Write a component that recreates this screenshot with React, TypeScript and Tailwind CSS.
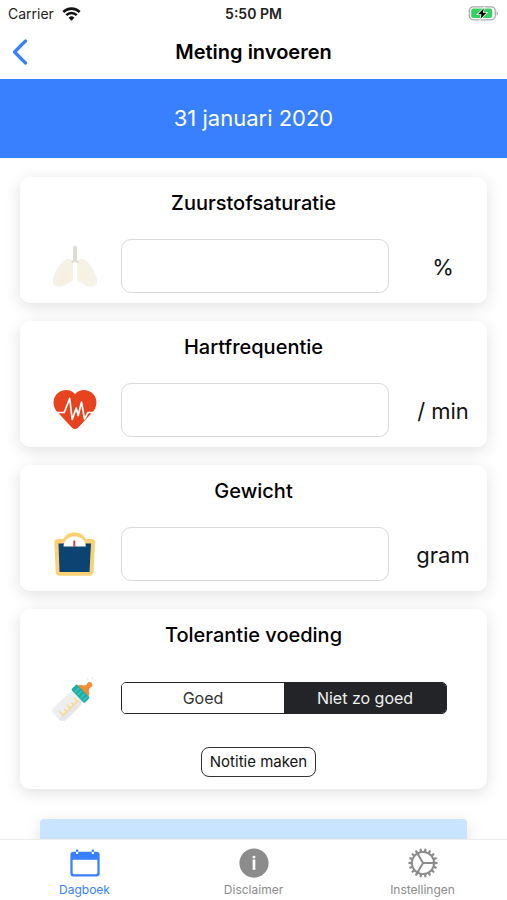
import { useState, type ReactNode } from 'react';
import { IoIosCalendar, IoIosCog, IoIosInformationCircle } from 'react-icons/io';

function WifiIcon() {
  return (
    <svg viewBox="0 0 20 15" className="h-[14px] w-[19px]" fill="none" stroke="#111" strokeWidth="2.8" aria-hidden="true">
      <path d="M1.2 5.4a12.4 12.4 0 0 1 17.6 0" />
      <path d="M4.4 8.7a7.9 7.9 0 0 1 11.2 0" />
      <path d="M10 14.6 6.9 11.5a4.4 4.4 0 0 1 6.2 0Z" fill="#111" stroke="none" />
    </svg>
  );
}

function BatteryIcon() {
  return (
    <svg viewBox="0 0 31 16" className="h-4 w-[31px]" aria-hidden="true">
      <rect x="1.3" y="0.8" width="26" height="13" rx="4" fill="#fff" stroke="#a9a9a9" strokeWidth="1.2" />
      <path d="M28.6 5.3c1.9.8 1.9 3.6 0 4.4Z" fill="#a9a9a9" />
      <rect x="3.2" y="2.6" width="21" height="9.4" rx="2.2" fill="#35d15c" />
      <path d="M15.8 2.3 10 8.200h3.500l-1 4.600 6-6.100h-3.600Z" fill="#000" stroke="#fff" strokeWidth="1.6" paintOrder="stroke" />
    </svg>
  );
}

function LungsIcon() {
  return (
    <svg viewBox="0 0 46 46" className="size-[46px]" aria-hidden="true">
      <path d="M14 16.500c2-.8 5-.5 7 1.500v20c-3 1-5.500 2.500-8 4-3 1.800-7 2-10 .5-2-1-2.500-3-2-5.500C2.500 29 7.500 20 14 16.500Z" fill="#f7f1e5" />
      <path d="M32 16.500c-2-.8-5-.5-7 1.500v20c3 1 5.500 2.500 8 4 3 1.800 7 2 10 .5 2-1 2.500-3 2-5.500C43.500 29 38.500 20 32 16.500Z" fill="#f7f2e6" />
      <path d="M14 26c-4 2-6 6-7 10l2 4c3 0 6-2 9-4Z" fill="#f9eee2" />
      <path d="M31 26c4 3 6 6 8 10l-3 3c-3 0-5-2-8-4Z" fill="#f8f0e2" />
      <path d="M21 4c0-1.500 4-1.500 4 0v13l2 2-1.300 1.500L23 18.500l-2.700 2L19 19l2-2Z" fill="#dcddd3" />
      <path d="M21 21c1.300-2 2.700-2 4 0v18h-4Z" fill="#fff" />
    </svg>
  );
}

function HeartIcon() {
  return (
    <svg viewBox="0 0 46 46" className="size-[46px]" aria-hidden="true">
      <path d="M23 7C27.500 2 34.500 1.800 39.500 5.500c5.800 4.500 6.300 12 2.500 18L26 40.800c-1.700 1.700-4.300 1.700-6 0L4 23.500C.2 17.500.7 10 6.500 5.500 11.500 1.800 18.500 2 23 7Z" fill="#e8431f" />
      <path d="M4 25.500h8.200l5.500-14 2.500 21 4-11.500 2 7.500L29.500 15l3 17 3.500-6.500h7" fill="none" stroke="#fff" strokeWidth="1.700" strokeLinejoin="round" />
    </svg>
  );
}

function ScaleIcon() {
  return (
    <svg viewBox="0 0 46 46" className="size-[46px]" aria-hidden="true">
      <path d="M6 8h5C14 3.500 17 1.500 22.500 1.500S31 3.500 34 8h5.500c2.500 0 3.700 1.200 3.500 3.700L41.500 41c-.2 2.500-1.300 3.700-3.800 3.700H7.600c-2.500 0-3.600-1.200-3.800-3.700L2.300 11.700C2.200 9.200 3.500 8 6 8Z" fill="#fbd174" />
      <path d="M6.500 12.500h32.500L37.500 41h-30Z" fill="#0b4373" />
      <path d="M11.500 15.500c0-1.500.4-3 1-4.500C14.500 7.500 18 5.500 22.500 5.500s8.500 2 10.300 5.500c.7 1.500 1 3 1 4.500Z" fill="#fff" />
      <path d="M22.300 9.500v6.500" stroke="#cf4055" strokeWidth="2" />
    </svg>
  );
}

function BottleIcon() {
  return (
    <svg viewBox="0 0 46 46" className="size-[46px]" aria-hidden="true">
      <path d="M35 3l1.500 2M40 2l.5 2.500M44.500 4.500l-1.500 1" stroke="#efedec" strokeWidth="1.300" />
      {/* the bottle stands upright here and is tilted as a whole */}
      <g transform="translate(37.500 10) rotate(46)">
        <path d="M-6 15.500H6C8.300 18 8.600 20 8.600 23v18c0 3.200-1.500 4.800-4.800 4.800h-7.600c-3.300 0-4.800-1.600-4.800-4.800V23c0-3 .3-5 2.600-7.500Z" fill="#eeeff1" />
        <path d="M3 15.500h3C8.300 18 8.600 20 8.600 23v18c0 3.200-1.500 4.800-4.800 4.800H3Z" fill="#e5e7ea" />
        <path d="M3.500 19v21h-6M3.500 20h-5M3.500 25h-3.500M3.500 30h-5M3.500 35h-3.500" fill="none" stroke="#f7dc91" strokeWidth="1.700" />
        <path d="M-7.500 9.500c0-3.500 3.500-4 4.800-6.200.7-1.300.2-2.300-.1-3C-3.300-1.500-2-2.800 0-2.800S3.300-1.500 2.800.3c-.3.700-.8 1.700-.1 3C4 5.500 7.500 6 7.500 9.500Z" fill="#f68b35" />
        <rect x="-9.500" y="8.500" width="19" height="8" rx="1.500" fill="#20afa8" />
        <path d="M-5 9.500v6M-1 9.500v6M3 9.500v6M7 9.500v6" stroke="#41c6bb" strokeWidth="1.200" />
      </g>
    </svg>
  );
}

function Card({ title, children }: { title: string; children: ReactNode }) {
  return (
    <section className="rounded-[10px] bg-white px-2 pt-3 shadow-[0_4px_16px_rgba(0,0,0,0.12)]">
      <h2 className="mb-[22px] text-center text-xl leading-7 font-medium text-black">{title}</h2>
      {children}
    </section>
  );
}

type MeasurementProps = {
  title: string;
  unit: string;
  icon: ReactNode;
};

function Measurement({ title, unit, icon }: MeasurementProps) {
  const [value, setValue] = useState('');

  return (
    <Card title={title}>
      <div className="flex items-center pb-[10px]">
        <div className="flex w-[93px] justify-center">{icon}</div>
        <input
          type="text"
          inputMode="decimal"
          aria-label={title}
          value={value}
          onChange={(e) => setValue(e.target.value)}
          className="h-[54px] min-w-0 flex-1 rounded-[10px] border border-[#d9d9d9] bg-white px-4 text-xl outline-none"
        />
        <span className="w-[90px] pt-0.5 pl-[18px] text-center text-[22px] leading-7 whitespace-nowrap text-[#111]">{unit}</span>
      </div>
    </Card>
  );
}

const tolerances = ['Goed', 'Niet zo goed'];

const tabs = [
  { label: 'Dagboek', icon: IoIosCalendar },
  { label: 'Disclaimer', icon: IoIosInformationCircle },
  { label: 'Instellingen', icon: IoIosCog },
];

export default function App() {
  const [tolerance, setTolerance] = useState('Niet zo goed');
  const [activeTab, setActiveTab] = useState('Dagboek');

  return (
    <div className="flex h-screen flex-col bg-white font-[Inter,sans-serif]">
      <div className="grid h-7 shrink-0 grid-cols-3 items-center px-2 text-sm text-[#222]">
        <div className="flex items-center gap-2">
          <span>Carrier</span>
          <WifiIcon />
        </div>
        <span className="text-center font-semibold">5:50 PM</span>
        <div className="flex justify-end">
          <BatteryIcon />
        </div>
      </div>

      <header className="grid h-[51px] shrink-0 grid-cols-[40px_1fr_40px] items-center pb-1">
        <button aria-label="Terug" className="flex justify-center">
          <svg viewBox="0 0 16 28" className="h-7 w-4" fill="none" stroke="#3880ff" strokeWidth="3.200" strokeLinecap="round" strokeLinejoin="round">
            <path d="M13.500 3 2.500 14l11 11" />
          </svg>
        </button>
        <h1 className="text-center text-xl font-semibold text-black">Meting invoeren</h1>
      </header>

      <div className="flex h-[79px] shrink-0 items-center justify-center bg-[#3880ff] text-[22px] text-white">
        31 januari 2020
      </div>

      <main className="min-h-0 flex-1 overflow-y-auto px-5 pt-[19px] [scrollbar-width:none]">
        <div className="flex flex-col gap-[18px]">
          <Measurement title="Zuurstofsaturatie" unit="%" icon={<LungsIcon />} />
          <Measurement title="Hartfrequentie" unit="/ min" icon={<HeartIcon />} />
          <Measurement title="Gewicht" unit="gram" icon={<ScaleIcon />} />

          <Card title="Tolerantie voeding">
            <div className="flex h-[54px] items-center pr-8">
              <div className="flex w-[93px] justify-center">
                <BottleIcon />
              </div>
              <div className="flex h-8 flex-1 overflow-hidden rounded-[5px] border border-[#222428]">
                {tolerances.map((option) => (
                  <button
                    key={option}
                    aria-pressed={tolerance === option}
                    onClick={() => setTolerance(option)}
                    className={`flex-1 text-base ${tolerance === option ? 'bg-[#222428] text-[#f0f0f0]' : 'bg-white text-[#333]'}`}
                  >
                    {option}
                  </button>
                ))}
              </div>
            </div>
            <div className="flex justify-center pt-[22px] pb-3 pl-[10px]">
              <button className="h-[30px] rounded-lg border border-[#333] px-2 text-[15px] text-[#111]">Notitie maken</button>
            </div>
          </Card>
        </div>

        <div className="px-5 pt-[30px] pb-8">
          <button aria-label="Opslaan" className="block h-12 w-full rounded bg-[#c9e4ff] shadow-[0_4px_16px_rgba(0,0,0,0.12)]" />
        </div>
      </main>

      <nav className="z-10 grid h-[61px] shrink-0 grid-cols-3 border-t border-[#ececec] bg-white">
        {tabs.map(({ label, icon: Icon }) => (
          <button
            key={label}
            onClick={() => setActiveTab(label)}
            className={`flex flex-col items-center gap-px pt-[5px] text-xs leading-4 ${activeTab === label ? 'text-[#3880ff]' : 'text-[#8c8c8c]'}`}
          >
            <Icon className="size-9" />
            {label}
          </button>
        ))}
      </nav>
    </div>
  );
}
